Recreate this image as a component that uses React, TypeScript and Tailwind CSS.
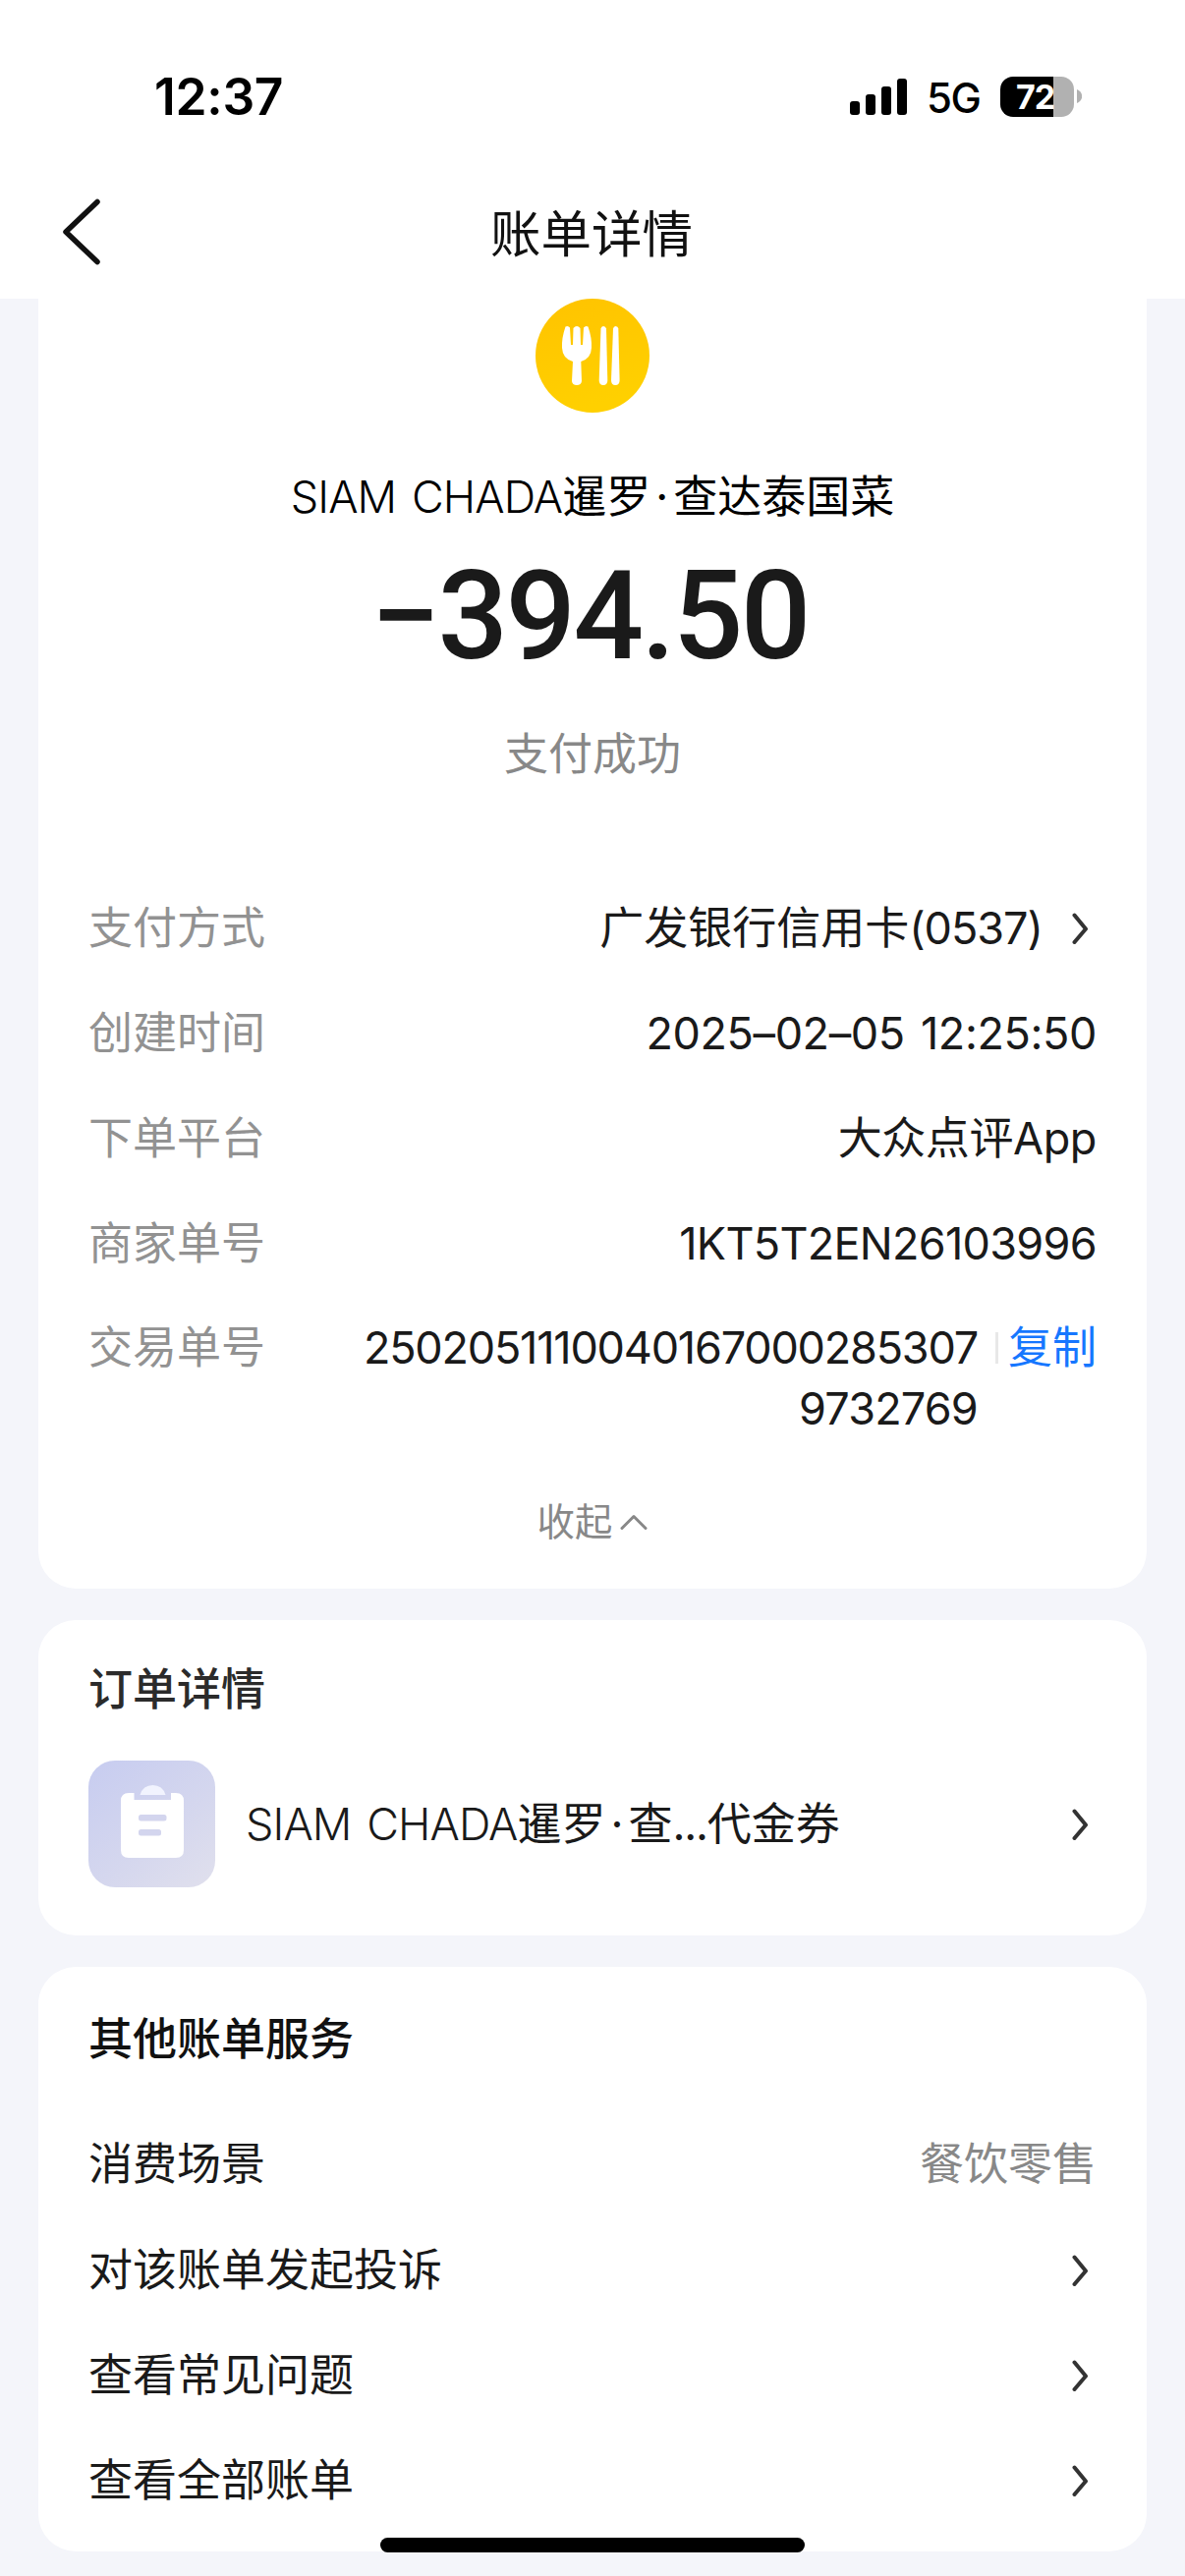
import type { ReactNode } from "react";

const details = [
  { label: "创建时间", value: "2025–02–05 12:25:50", tracking: "tracking-[-0.4px] [word-spacing:4px]" },
  { label: "下单平台", value: "大众点评App", tracking: "tracking-[-0.4px]" },
  { label: "商家单号", value: "1KT5T2EN26103996", tracking: "tracking-[-0.7px]" },
];

const services = ["对该账单发起投诉", "查看常见问题", "查看全部账单"];

function ChevronRight() {
  return (
    <svg
      className="mr-2 h-8 w-[17px] shrink-0"
      viewBox="0 0 17 32"
      fill="none"
      stroke="#333333"
      strokeWidth="4"
      strokeLinecap="round"
      strokeLinejoin="round"
    >
      <path d="M2.5 2.5 L14 16.5 L2.5 30" />
    </svg>
  );
}

function StatusBar() {
  return (
    <div className="flex h-[172px] items-start justify-between pt-[67px] pr-[105px] pl-[157px]">
      <span className="text-[51.5px] leading-[62px] font-semibold tracking-[-0.3px] text-black">
        12:37
      </span>

      <div className="flex items-center pt-[10px]">
        <svg className="h-[38px] w-[58px]" viewBox="0 0 58 38">
          <rect x="0" y="24" width="10" height="14" rx="3" />
          <rect x="16" y="17" width="10" height="21" rx="3" />
          <rect x="32" y="9" width="10" height="29" rx="3" />
          <rect x="48" y="1" width="10" height="37" rx="3" />
        </svg>
        <span className="ml-[20px] w-[57px] pt-1 text-[42px] leading-[38px] font-medium tracking-[-1.5px] text-black">
          5G
        </span>
        <div className="ml-[18px] flex h-[41px] w-[75px] items-center justify-center rounded-[13px] bg-[linear-gradient(90deg,#000_0_54px,#b1b1b1_54px)]">
          <span className="pr-1 text-[34px] leading-[41px] font-bold tracking-[-1px] text-white">
            72
          </span>
        </div>
        <svg className="ml-[3px] h-[14px] w-[5px]" viewBox="0 0 5 14">
          <path d="M0 0 C7 3 7 11 0 14 Z" fill="#b1b1b1" />
        </svg>
      </div>
    </div>
  );
}

function NavBar() {
  return (
    <div className="grid h-[132px] grid-cols-[200px_1fr_202px] items-center">
      <svg
        className="mb-[4px] ml-[63px] h-[68px] w-[40px]"
        viewBox="0 0 40 68"
        fill="none"
        stroke="#111111"
        strokeWidth="5.5"
        strokeLinecap="round"
        strokeLinejoin="round"
      >
        <path d="M36 3.5 L4 34 L36 64.5" />
      </svg>
      <h1 className="text-center text-[51.5px] leading-[62px] font-normal text-[#111]">
        账单详情
      </h1>
    </div>
  );
}

function FoodIcon() {
  return (
    <svg className="size-[116px]" viewBox="0 0 116 116">
      <defs>
        <linearGradient id="food" x1="0" y1="0" x2="0.3" y2="1">
          <stop offset="0" stopColor="#ffc300" />
          <stop offset="1" stopColor="#ffd000" />
        </linearGradient>
      </defs>
      <circle cx="58" cy="58" r="58" fill="url(#food)" />
      <g fill="#fff">
        <path d="M30.5 28.5 Q33 27 35 29.5 L36 47 H38 L38.5 30 Q42 26 45.5 30 L46 47 H48 L49 29.5 Q51 27 53.5 28.5 Q57.5 40 57 50 Q56.5 61 46.3 64 L47 84 Q46.5 88 42 88 Q37.5 88 37 84 L38 64 Q27.5 61 27 50 Q26.5 40 30.5 28.5 Z" />
        <path d="M66.5 30.5 Q67 28 69 28 Q71.5 28 72 30.5 L73.3 83 Q73.3 88 69 88 Q64.7 88 64.7 83 Z" />
        <path d="M79 30.5 Q79.5 28 81.5 28 Q84 28 84.3 30.5 L85.6 83 Q85.6 88 81.2 88 Q77 88 77 83 Z" />
      </g>
    </svg>
  );
}

function OrderIcon() {
  return (
    <svg className="size-[129px] shrink-0" viewBox="0 0 129 129">
      <defs>
        <linearGradient id="order" x1="0.1" y1="0" x2="0.9" y2="1">
          <stop offset="0" stopColor="#c8cdf0" />
          <stop offset="0.6" stopColor="#d5d7ee" />
          <stop offset="1" stopColor="#dfdfed" />
        </linearGradient>
      </defs>
      <rect width="129" height="129" rx="27" fill="url(#order)" />
      <path
        d="M41 33 H46.5 V40 H84 V33 H89 Q97 33 97 41 V91 Q97 99 89 99 H41 Q33 99 33 91 V41 Q33 33 41 33 Z"
        fill="#fff"
      />
      <path d="M52.5 35 Q55.5 25 65.5 25 Q75.5 25 78.5 35 Z" fill="#f1f3fe" />
      <rect x="51" y="55" width="28.5" height="6.5" rx="2.5" fill="#d3d5ee" />
      <rect x="51" y="70" width="23" height="6.5" rx="2.5" fill="#d3d5ee" />
    </svg>
  );
}

function Merchant({ children }: { children: ReactNode }) {
  return (
    <>
      <span className="font-light tracking-[-0.9px] [word-spacing:4px]">SIAM CHADA</span>暹罗
      <span className="mx-[5px]">·</span>
      {children}
    </>
  );
}

function Row({ label, children }: { label: string; children: ReactNode }) {
  return (
    <div className="flex h-[107px] items-center justify-between">
      <span className="text-[#929292]">{label}</span>
      {children}
    </div>
  );
}

export default function App() {
  return (
    <div className="relative flex h-[2622px] w-[1206px] flex-col overflow-hidden bg-[#f4f5fa] font-['Inter','Noto_Sans_CJK_SC',sans-serif] text-[45px] leading-[62px] text-[#1a1a1a]">
      <header className="h-[304px] shrink-0 bg-white">
        <StatusBar />
        <NavBar />
      </header>

      <main className="flex flex-col gap-8 px-[39px]">
        {/* Payment summary */}
        <section className="h-[1313px] rounded-b-[38px] bg-white px-[51px]">
          <div className="flex flex-col items-center">
            <FoodIcon />
            <p className="mt-[55px] whitespace-nowrap text-black">
              <Merchant>查达泰国菜</Merchant>
            </p>
            <p className="mt-[28px] mr-[6px] font-['Roboto',sans-serif] text-[126px] leading-[125px] font-medium tracking-[-2.6px] whitespace-nowrap">
              −394.50
            </p>
            <p className="mt-[47px] text-[#888]">支付成功</p>
          </div>

          <div className="mt-[92px]">
            <Row label="支付方式">
              <div className="flex items-center gap-[30px]">
                <span>
                  广发银行信用卡<span className="tracking-[-1px]">(0537)</span>
                </span>
                <ChevronRight />
              </div>
            </Row>
            {details.map((item) => (
              <Row key={item.label} label={item.label}>
                <span className={item.tracking}>{item.value}</span>
              </Row>
            ))}
            <div className="flex items-start pt-[22px]">
              <span className="text-[#929292]">交易单号</span>
              <p className="ml-auto text-right">
                <span className="tracking-[-1.2px]">2502051110040167000285307</span>
                <br />
                <span className="tracking-[-0.8px]">9732769</span>
              </p>
              <span className="mt-[15px] ml-[18px] h-8 w-[3px] bg-[#e8e8e8]" />
              <button className="ml-[10px] text-[#1677ff]">复制</button>
            </div>
          </div>

          <div className="mt-[53px] flex items-center justify-center gap-2 text-[38.4px] text-[#888]">
            收起
            <svg
              className="h-[18px] w-[28px]"
              viewBox="0 0 28 18"
              fill="none"
              stroke="#888888"
              strokeWidth="3"
              strokeLinecap="round"
              strokeLinejoin="round"
            >
              <path d="M2 15.5 L14 3.5 L26 15.5" />
            </svg>
          </div>
        </section>

        {/* Order */}
        <section className="h-[321px] rounded-[38px] bg-white px-[51px] pt-[40px]">
          <h2 className="font-medium text-[#2b2b2b]">订单详情</h2>
          <div className="mt-[41px] flex items-center">
            <OrderIcon />
            <span className="ml-[31px] whitespace-nowrap">
              <Merchant>
                查<span className="tracking-[-1.2px]">...</span>代金券
              </Merchant>
            </span>
            <div className="ml-auto">
              <ChevronRight />
            </div>
          </div>
        </section>

        {/* Other services */}
        <section className="h-[595px] rounded-[38px] bg-white px-[51px] pt-[43px]">
          <h2 className="font-medium text-[#111]">其他账单服务</h2>
          <div className="mt-[42px]">
            <div className="flex h-[108px] items-center justify-between">
              <span>消费场景</span>
              <span className="text-[#888]">餐饮零售</span>
            </div>
            {services.map((name) => (
              <div key={name} className="flex h-[107.4px] items-center justify-between">
                <span>{name}</span>
                <ChevronRight />
              </div>
            ))}
          </div>
        </section>
      </main>

      {/* Home indicator */}
      <div className="absolute bottom-6 left-[387px] h-[15px] w-[432px] rounded-full bg-black" />
    </div>
  );
}
